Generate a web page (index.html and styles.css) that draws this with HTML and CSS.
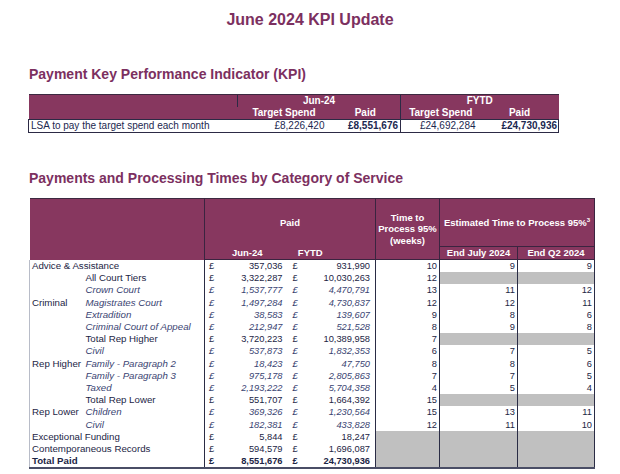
FILE: index.html
```html
<!DOCTYPE html>
<html>
<head>
<meta charset="utf-8">
<link rel="stylesheet" href="styles.css">
</head>
<body>
<h1 class="title">June 2024 KPI Update</h1>

<h2 class="section">Payment Key Performance Indicator (KPI)</h2>
<table class="kpi">
  <colgroup>
    <col class="k1"><col class="k2"><col class="k3"><col class="k4"><col class="k5">
  </colgroup>
  <thead>
    <tr><th></th><th colspan="2" class="grp">Jun-24</th><th colspan="2" class="grp">FYTD</th></tr>
    <tr><th></th><th>Target Spend</th><th>Paid</th><th class="grp">Target Spend</th><th>Paid</th></tr>
  </thead>
  <tbody>
    <tr>
      <td class="lbl">LSA to pay the target spend each month</td>
      <td class="num ts1">£8,226,420</td>
      <td class="num pd1 b">£8,551,676</td>
      <td class="num ts2 grp">£24,692,284</td>
      <td class="num pd2 b">£24,730,936</td>
    </tr>
  </tbody>
</table>

<h2 class="section s2">Payments and Processing Times by Category of Service</h2>
<table class="pt">
  <colgroup>
    <col class="c1"><col class="c2"><col class="c3"><col class="c4"><col class="c5"><col class="c6"><col class="c7"><col class="c8"><col class="c9">
  </colgroup>
  <thead>
    <tr class="h1">
      <th colspan="2" rowspan="2" class="vl"></th>
      <th colspan="4" class="paid vl">Paid</th>
      <th rowspan="2" class="time vl">Time to<br>Process 95%<br>(weeks)</th>
      <th colspan="2" class="est">Estimated Time to Process 95%<sup>3</sup></th>
    </tr>
    <tr class="h2">
      <th colspan="2" class="jun">Jun-24</th>
      <th colspan="2" class="fytd vl">FYTD</th>
      <th class="sub vl">End July 2024</th>
      <th class="sub">End Q2 2024</th>
    </tr>
  </thead>
  <tbody>
    <tr><td colspan="2">Advice &amp; Assistance</td><td class="p">£</td><td class="n">357,036</td><td class="p">£</td><td class="n vl">931,990</td><td class="t vl">10</td><td class="t vl">9</td><td class="t">9</td></tr>
    <tr><td></td><td>All Court Tiers</td><td class="p">£</td><td class="n">3,322,287</td><td class="p">£</td><td class="n vl">10,030,263</td><td class="t vl">12</td><td class="g vl"></td><td class="g"></td></tr>
    <tr class="i"><td></td><td>Crown Court</td><td class="p">£</td><td class="n">1,537,777</td><td class="p">£</td><td class="n vl">4,470,791</td><td class="t vl">13</td><td class="t vl">11</td><td class="t">12</td></tr>
    <tr class="i"><td class="cat">Criminal</td><td>Magistrates Court</td><td class="p">£</td><td class="n">1,497,284</td><td class="p">£</td><td class="n vl">4,730,837</td><td class="t vl">12</td><td class="t vl">12</td><td class="t">11</td></tr>
    <tr class="i"><td></td><td>Extradition</td><td class="p">£</td><td class="n">38,583</td><td class="p">£</td><td class="n vl">139,607</td><td class="t vl">9</td><td class="t vl">8</td><td class="t">6</td></tr>
    <tr class="i"><td></td><td>Criminal Court of Appeal</td><td class="p">£</td><td class="n">212,947</td><td class="p">£</td><td class="n vl">521,528</td><td class="t vl">8</td><td class="t vl">9</td><td class="t">8</td></tr>
    <tr><td></td><td>Total Rep Higher</td><td class="p">£</td><td class="n">3,720,223</td><td class="p">£</td><td class="n vl">10,389,958</td><td class="t vl">7</td><td class="g vl"></td><td class="g"></td></tr>
    <tr class="i"><td></td><td>Civil</td><td class="p">£</td><td class="n">537,873</td><td class="p">£</td><td class="n vl">1,832,353</td><td class="t vl">6</td><td class="t vl">7</td><td class="t">5</td></tr>
    <tr class="i"><td class="cat">Rep Higher</td><td>Family - Paragraph 2</td><td class="p">£</td><td class="n">18,423</td><td class="p">£</td><td class="n vl">47,750</td><td class="t vl">8</td><td class="t vl">8</td><td class="t">6</td></tr>
    <tr class="i"><td></td><td>Family - Paragraph 3</td><td class="p">£</td><td class="n">975,178</td><td class="p">£</td><td class="n vl">2,805,863</td><td class="t vl">7</td><td class="t vl">7</td><td class="t">5</td></tr>
    <tr class="i"><td></td><td>Taxed</td><td class="p">£</td><td class="n">2,193,222</td><td class="p">£</td><td class="n vl">5,704,358</td><td class="t vl">4</td><td class="t vl">5</td><td class="t">4</td></tr>
    <tr><td></td><td>Total Rep Lower</td><td class="p">£</td><td class="n">551,707</td><td class="p">£</td><td class="n vl">1,664,392</td><td class="t vl">15</td><td class="g vl"></td><td class="g"></td></tr>
    <tr class="i"><td class="cat">Rep Lower</td><td>Children</td><td class="p">£</td><td class="n">369,326</td><td class="p">£</td><td class="n vl">1,230,564</td><td class="t vl">15</td><td class="t vl">13</td><td class="t">11</td></tr>
    <tr class="i"><td></td><td>Civil</td><td class="p">£</td><td class="n">182,381</td><td class="p">£</td><td class="n vl">433,828</td><td class="t vl">12</td><td class="t vl">11</td><td class="t">10</td></tr>
    <tr><td colspan="2">Exceptional Funding</td><td class="p">£</td><td class="n">5,844</td><td class="p">£</td><td class="n vl">18,247</td><td class="g vl"></td><td class="g vl"></td><td class="g"></td></tr>
    <tr><td colspan="2">Contemporaneous Records</td><td class="p">£</td><td class="n">594,579</td><td class="p">£</td><td class="n vl">1,696,087</td><td class="g vl"></td><td class="g vl"></td><td class="g"></td></tr>
    <tr class="tot"><td colspan="2">Total Paid</td><td class="p">£</td><td class="n">8,551,676</td><td class="p">£</td><td class="n vl">24,730,936</td><td class="g vl"></td><td class="g vl"></td><td class="g"></td></tr>
  </tbody>
</table>
</body>
</html>
```

FILE: styles.css
```css
html, body {
  margin: 0;
  padding: 0;
  background: #ffffff;
}
body {
  font-family: "Liberation Sans", Arial, sans-serif;
  width: 620px;
  height: 474px;
  overflow: hidden;
}
.title {
  margin: 11px 0 0 0;
  font-size: 16px;
  line-height: 18px;
  font-weight: bold;
  color: #7c305f;
  text-align: center;
}
.section {
  margin: 37px 0 0 29px;
  font-size: 14px;
  line-height: 16px;
  font-weight: bold;
  color: #7c305f;
}
.section.s2 {
  margin-top: 37px;
}

/* KPI table */
.kpi {
  margin: 12px 0 0 28px;
  border-collapse: collapse;
  table-layout: fixed;
  width: 530px;
  font-size: 10px;
}
.kpi .k1 { width: 209px; }
.kpi .k2 { width: 93px; }
.kpi .k3 { width: 70px; }
.kpi .k4 { width: 80px; }
.kpi .k5 { width: 78px; }
.kpi thead th {
  background: #87375f;
  color: #ffffff;
  font-weight: bold;
  height: 12px;
  line-height: 12px;
  padding: 0;
  text-align: center;
  white-space: nowrap;
}
.kpi thead tr:first-child th {
  border-top: 1px solid #3c2940;
}
.kpi .grp {
  border-left: 1px solid #2c2a45;
}
.kpi tbody td {
  height: 12px;
  line-height: 12px;
  padding: 0;
  color: #1c2850;
  border-top: 1px solid #2c2a45;
  border-bottom: 1px solid #2c2a45;
  white-space: nowrap;
}
.kpi tbody td.lbl {
  border-left: 1px solid #2c2a45;
  padding-left: 2px;
}
.kpi tbody td.pd2 {
  border-right: 1px solid #2c2a45;
}
.kpi .num { text-align: right; }
.kpi .ts1 { padding-right: 6px; }
.kpi .pd1 { padding-right: 2px; }
.kpi .ts2 { padding-right: 5px; }
.kpi .pd2 { padding-right: 1px; }
.kpi .b { font-weight: bold; }

/* Processing table */
.pt {
  margin: 12px 0 0 29px;
  border-collapse: collapse;
  table-layout: fixed;
  width: 565px;
  font-size: 9.7px;
  color: #1c2545;
}
.pt .c1 { width: 55px; }
.pt .c2 { width: 120px; }
.pt .c3 { width: 12px; }
.pt .c4 { width: 73px; }
.pt .c5 { width: 10px; }
.pt .c6 { width: 76px; }
.pt .c7 { width: 64px; }
.pt .c8 { width: 78px; }
.pt .c9 { width: 77px; }
.pt thead th {
  background: #87375f;
  color: #ffffff;
  font-weight: bold;
  padding: 0;
  font-size: 9.5px;
  white-space: nowrap;
}
.pt thead tr.h1 th {
  border-top: 1px solid #3c2940;
  height: 47px;
}
.pt thead tr.h2 th {
  height: 12px;
  line-height: 12px;
  border-bottom: 1px solid #3a2440;
  vertical-align: bottom;
}
.pt thead .vl {
  border-right: 1px solid #3a2440;
}
.pt th.paid {
  text-align: center;
  vertical-align: middle;
}
.pt th.time {
  line-height: 11.5px;
  vertical-align: middle;
  text-align: center;
  border-bottom: 1px solid #3a2440;
}
.pt th.est {
  border-right: 1px solid #3a2440;
  vertical-align: middle;
  text-align: center;
}
.pt th.est sup {
  font-size: 6px;
  vertical-align: 4px;
  line-height: 0;
}
.pt th.jun {
  text-align: center;
}
.pt th.fytd {
  text-align: center;
  padding-right: 44px;
}
.pt th.sub {
  text-align: center;
  border-top: 1px solid #3a2440;
  border-right: 1px solid #3a2440;
}
.pt tbody td {
  height: 12.2px;
  line-height: 12px;
  padding: 0;
  white-space: nowrap;
  overflow: visible;
}
.pt tbody td.p,
.pt tbody td.n,
.pt tbody td.t {
  font-size: 9.3px;
}
.pt tbody tr td:first-child {
  border-left: 1px solid #b8bcc8;
  padding-left: 2px;
}
.pt tbody td:nth-child(2) {
  padding-left: 1px;
}
.pt tbody td.p {
  padding-left: 4px;
  border-left: 1px solid #2a2c45;
}
.pt tbody td.n {
  text-align: right;
  padding-right: 7px;
}
.pt tbody td.n.vl {
  padding-right: 5px;
}
.pt tbody td.p:nth-last-child(5) {
  border-left: none;
  padding-left: 3px;
}
.pt tbody .vl {
  border-right: 1px solid #2a2c45;
}
.pt tbody td.t {
  text-align: right;
  padding-right: 2px;
}
.pt tbody td.g {
  background: #c0c0c0;
}
.pt tbody td:last-child {
  border-right: 1px solid #2a2c45;
}
.pt tbody tr.i td {
  font-style: italic;
  color: #3a4472;
}
.pt tbody tr.i td.cat,
.pt tbody tr.i td.t {
  font-style: normal;
  color: #1c2545;
}
.pt tbody tr.tot td {
  font-weight: bold;
  border-bottom: 2px solid #4a4e66;
}
```
